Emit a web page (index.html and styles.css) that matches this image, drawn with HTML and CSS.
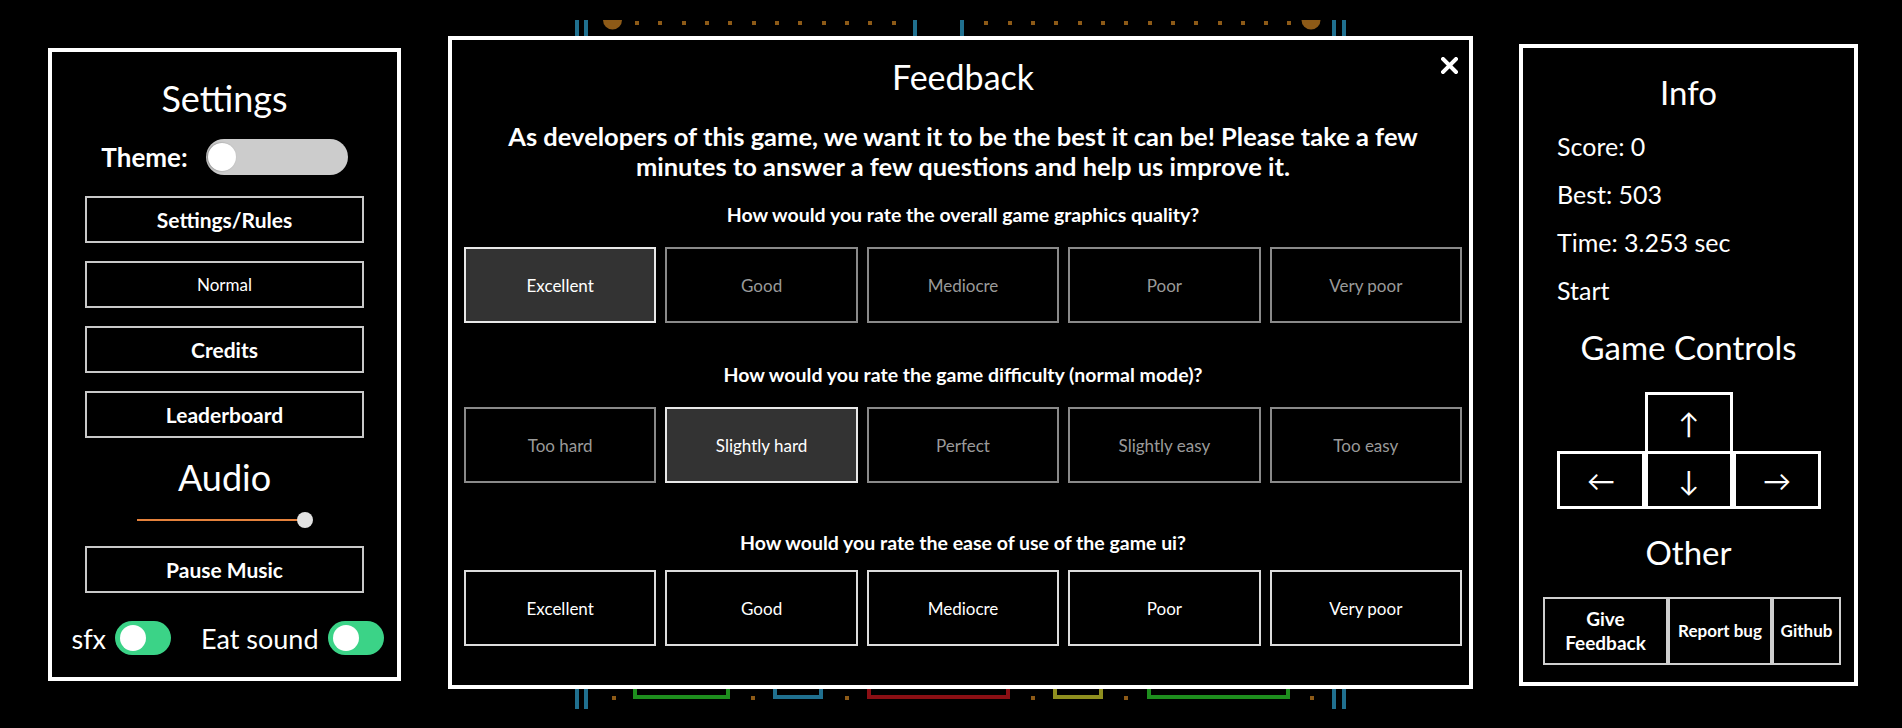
FILE: index.html
```html
<!DOCTYPE html>
<html lang="en">
<head>
<meta charset="utf-8">
<title>Feedback</title>
<link rel="stylesheet" href="styles.css">
</head>
<body>
<svg class="board" width="1902" height="728" viewBox="0 0 1902 728" aria-hidden="true">
  <g fill="#20708f">
    <rect x="575" y="20" width="4" height="24"/>
    <rect x="584" y="20" width="4" height="24"/>
    <rect x="913" y="20" width="4" height="24"/>
    <rect x="960" y="20" width="4" height="24"/>
    <rect x="1332" y="20" width="4" height="24"/>
    <rect x="1342" y="20" width="4" height="24"/>
    <rect x="575" y="682" width="4" height="27"/>
    <rect x="584" y="682" width="4" height="27"/>
    <rect x="1332" y="682" width="4" height="27"/>
    <rect x="1342" y="682" width="4" height="27"/>
  </g>
  <g fill="#8d5a17">
    <path d="M603 20 A9.5 9.5 0 0 0 622 20 Z"/>
    <path d="M1301.5 20 A9.5 9.5 0 0 0 1320.5 20 Z"/>
    <rect x="635" y="21" width="4" height="4"/><rect x="658" y="21" width="4" height="4"/>
    <rect x="682" y="21" width="4" height="4"/><rect x="705" y="21" width="4" height="4"/>
    <rect x="728" y="21" width="4" height="4"/><rect x="752" y="21" width="4" height="4"/>
    <rect x="775" y="21" width="4" height="4"/><rect x="798" y="21" width="4" height="4"/>
    <rect x="822" y="21" width="4" height="4"/><rect x="845" y="21" width="4" height="4"/>
    <rect x="868" y="21" width="4" height="4"/><rect x="892" y="21" width="4" height="4"/>
    <rect x="984" y="21" width="4" height="4"/><rect x="1008" y="21" width="4" height="4"/>
    <rect x="1031" y="21" width="4" height="4"/><rect x="1054" y="21" width="4" height="4"/>
    <rect x="1078" y="21" width="4" height="4"/><rect x="1101" y="21" width="4" height="4"/>
    <rect x="1124" y="21" width="4" height="4"/><rect x="1148" y="21" width="4" height="4"/>
    <rect x="1171" y="21" width="4" height="4"/><rect x="1194" y="21" width="4" height="4"/>
    <rect x="1218" y="21" width="4" height="4"/><rect x="1241" y="21" width="4" height="4"/>
    <rect x="1264" y="21" width="4" height="4"/><rect x="1287" y="21" width="4" height="4"/>
    <rect x="612" y="696" width="4" height="4"/><rect x="751" y="696" width="4" height="4"/>
    <rect x="845" y="696" width="4" height="4"/><rect x="1031" y="696" width="4" height="4"/>
    <rect x="1124" y="696" width="4" height="4"/><rect x="1310" y="696" width="4" height="4"/>
  </g>
  <g fill="none" stroke-width="4">
    <rect x="635" y="600" width="93" height="97" stroke="#1e8e1e"/>
    <rect x="775" y="600" width="46" height="97" stroke="#20708f"/>
    <rect x="869" y="600" width="139" height="97" stroke="#8c0f14"/>
    <rect x="1055" y="600" width="46" height="97" stroke="#8f8f1f"/>
    <rect x="1149" y="600" width="139" height="97" stroke="#1e8e1e"/>
  </g>
</svg>

<main class="layout">
  <aside class="panel settings">
    <h2 class="panel-title">Settings</h2>
    <div class="theme-row">
      <span class="theme-label">Theme:</span>
      <span class="switch switch-theme"><span class="knob"></span></span>
    </div>
    <button class="menu-btn first">Settings/Rules</button>
    <button class="menu-btn light">Normal</button>
    <button class="menu-btn">Credits</button>
    <button class="menu-btn">Leaderboard</button>
    <h2 class="panel-title audio-title">Audio</h2>
    <div class="slider"><span class="track"></span><span class="thumb"></span></div>
    <button class="menu-btn">Pause Music</button>
    <div class="toggle-row">
      <span class="toggle-label">sfx</span>
      <span class="switch switch-on"><span class="knob"></span></span>
      <span class="toggle-label second">Eat sound</span>
      <span class="switch switch-on"><span class="knob"></span></span>
    </div>
  </aside>

  <section class="modal">
    <button class="close" aria-label="Close">
      <svg width="17" height="17" viewBox="0 0 17 17"><path d="M2 2 L15 15 M15 2 L2 15" stroke="#fff" stroke-width="4" stroke-linecap="square"/></svg>
    </button>
    <h2 class="modal-title">Feedback</h2>
    <p class="intro">As developers of this game, we want it to be the best it can be! Please take a few<br>minutes to answer a few questions and help us improve it.</p>

    <p class="question">How would you rate the overall game graphics quality?</p>
    <div class="options">
      <button class="opt selected">Excellent</button>
      <button class="opt">Good</button>
      <button class="opt">Mediocre</button>
      <button class="opt">Poor</button>
      <button class="opt">Very poor</button>
    </div>

    <p class="question q2">How would you rate the game difficulty (normal mode)?</p>
    <div class="options">
      <button class="opt">Too hard</button>
      <button class="opt selected">Slightly hard</button>
      <button class="opt">Perfect</button>
      <button class="opt">Slightly easy</button>
      <button class="opt">Too easy</button>
    </div>

    <p class="question q3">How would you rate the ease of use of the game ui?</p>
    <div class="options fresh">
      <button class="opt">Excellent</button>
      <button class="opt">Good</button>
      <button class="opt">Mediocre</button>
      <button class="opt">Poor</button>
      <button class="opt">Very poor</button>
    </div>
  </section>

  <aside class="panel info">
    <h2 class="panel-title small">Info</h2>
    <div class="stats">
      <div class="stat">Score: 0</div>
      <div class="stat">Best: 503</div>
      <div class="stat">Time: 3.253 sec</div>
      <div class="stat">Start</div>
    </div>
    <h2 class="panel-title small controls-title">Game Controls</h2>
    <div class="keys">
      <span class="key up">↑</span>
      <span class="key left">←</span>
      <span class="key down">↓</span>
      <span class="key right">→</span>
    </div>
    <h2 class="panel-title small other-title">Other</h2>
    <div class="links">
      <button class="link w-feedback">Give<br>Feedback</button>
      <button class="link w-bug">Report bug</button>
      <button class="link w-github">Github</button>
    </div>
  </aside>
</main>
</body>
</html>
```

FILE: styles.css
```css
* { box-sizing: border-box; }

html, body {
  margin: 0;
  padding: 0;
}

body {
  width: 1902px;
  height: 728px;
  overflow: hidden;
  position: relative;
  background: #000;
  color: #fff;
  font-family: Lato, "Noto Sans", sans-serif;
}

button {
  font-family: Lato, "Noto Sans", sans-serif;
  cursor: pointer;
  padding: 0;
}

.board {
  position: absolute;
  left: 0;
  top: 0;
  z-index: 0;
}

.layout {
  position: relative;
  z-index: 1;
  display: flex;
  align-items: flex-start;
  height: 728px;
  padding-left: 48px;
}

.panel {
  background: #000;
  border: 4px solid #fff;
  display: flex;
  flex-direction: column;
  align-items: center;
}

.panel-title {
  margin: 0;
  font-size: 36px;
  line-height: 40px;
  font-weight: 400;
}

.panel-title.small { font-size: 33px; }

/* ---------- settings panel ---------- */
.settings {
  width: 353px;
  height: 633px;
  margin-top: 48px;
  padding-top: 26px;
}

.theme-row {
  display: flex;
  align-items: center;
  gap: 18px;
  height: 36px;
  margin-top: 21px;
}

.theme-label {
  font-size: 26px;
  font-weight: 700;
}

.switch {
  display: flex;
  align-items: center;
  border-radius: 999px;
}

.switch-theme {
  width: 142px;
  height: 36px;
  background: #cccccc;
  padding-left: 2px;
}

.switch-theme .knob {
  width: 28px;
  height: 28px;
  box-shadow: -1px 0 2px rgba(0,0,0,0.35);
}

.switch-on {
  width: 56px;
  height: 34px;
  background: #3bd387;
  padding-left: 5px;
}

.switch-on .knob {
  width: 26px;
  height: 26px;
}

.knob {
  display: block;
  border-radius: 50%;
  background: #fff;
}

.menu-btn {
  width: 279px;
  height: 47px;
  margin-top: 18px;
  background: #000;
  color: #fff;
  border: 2px solid #c8c8c8;
  font-size: 21px;
  font-weight: 700;
}

.menu-btn.first { margin-top: 21px; }
.menu-btn.light { font-size: 17px; font-weight: 400; }

.audio-title { margin-top: 19px; }

.slider {
  width: 176px;
  height: 16px;
  margin-top: 15px;
  display: flex;
  align-items: center;
}

.track {
  flex: 1;
  height: 2px;
  background: #e5823c;
}

.thumb {
  width: 16px;
  height: 16px;
  border-radius: 50%;
  background: #e2e2e2;
  margin-left: -8px;
}

.toggle-row {
  display: flex;
  align-items: center;
  height: 34px;
  margin-top: 28px;
  margin-left: 6px;
}

.toggle-label {
  font-size: 27px;
  margin-right: 9px;
}

.toggle-label.second { margin-left: 30px; }

/* ---------- modal ---------- */
.modal {
  position: relative;
  width: 1025px;
  height: 653px;
  margin-top: 36px;
  margin-left: 47px;
  background: #000;
  border: 4px solid #fff;
  padding: 17px 7px 0 12px;
  text-align: center;
}

.close {
  position: absolute;
  top: 17px;
  right: 11px;
  width: 17px;
  height: 17px;
  background: none;
  border: 0;
  display: flex;
}

.modal-title {
  margin: 0;
  font-size: 34px;
  line-height: 40px;
  font-weight: 400;
}

.intro {
  margin: 24px 0 0;
  font-size: 25.5px;
  line-height: 30px;
  font-weight: 700;
  white-space: nowrap;
}

.question {
  margin: 22px 0 0;
  font-size: 19.5px;
  line-height: 24px;
  font-weight: 700;
}

.question.q2 { margin-top: 40px; }
.question.q3 { margin-top: 48px; }

.options {
  display: grid;
  grid-template-columns: repeat(5, 1fr);
  gap: 9px;
  margin-top: 20px;
}

.options.fresh { margin-top: 15px; }

.opt {
  height: 76px;
  background: #000;
  color: #9a9a9a;
  border: 2px solid #8a8a8a;
  font-size: 17px;
  font-weight: 400;
}

.opt.selected {
  background: #333333;
  border-color: #e8e8e8;
  color: #fff;
}

.options.fresh .opt {
  border-color: #dcdcdc;
  color: #fff;
}

/* ---------- info panel ---------- */
.info {
  width: 339px;
  height: 642px;
  margin-top: 44px;
  margin-left: 46px;
  padding-top: 24px;
}

.stats {
  align-self: stretch;
  padding-left: 34px;
  margin-top: 10px;
}

.stat {
  font-size: 25px;
  line-height: 48px;
}

.controls-title { margin-top: 13px; }

.keys {
  display: grid;
  grid-template-columns: repeat(3, 88px);
  margin-top: 25px;
  margin-left: 1px;
}

.key {
  display: flex;
  align-items: center;
  justify-content: center;
  border: 3px solid #fff;
  font-size: 28px;
  height: 58px;
  margin-top: -3px;
}

.key.up {
  grid-column: 2;
  grid-row: 1;
  height: 62px;
  margin-top: 0;
}

.key.left { grid-column: 1; grid-row: 2; }
.key.down { grid-column: 2; grid-row: 2; }
.key.right { grid-column: 3; grid-row: 2; }

.other-title { margin-top: 23px; }

.links {
  display: flex;
  align-self: flex-start;
  margin-top: 25px;
  margin-left: 20px;
}

.link {
  height: 68px;
  background: #000;
  color: #fff;
  border: 2px solid #cfcfcf;
  font-size: 17px;
  font-weight: 700;
  line-height: 24px;
}

.w-feedback { width: 125px; font-size: 19px; }
.w-bug { width: 104px; }
.w-github { width: 69px; }
```
